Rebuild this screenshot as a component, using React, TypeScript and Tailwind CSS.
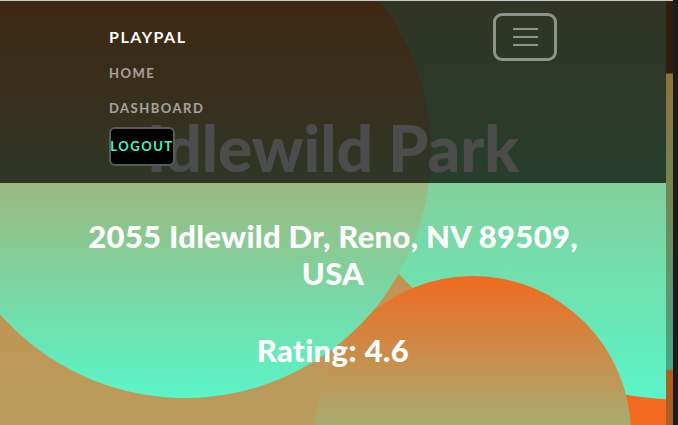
import React from "react";

export default function App() {
  return (
    <div className="flex h-[425px] w-[678px] overflow-hidden bg-[#1c1c1c] font-['Lato','Liberation_Sans',sans-serif]">
      <main className="relative h-[425px] w-[666px] overflow-hidden border-t border-[#c8c8c8] bg-[linear-gradient(to_bottom,#d97f39,#b89d5e)]">
        {/* decorative background blobs */}
        <div className="absolute left-[400px] top-[349px] h-[600px] w-[600px] rounded-full bg-[#f16a20]" />
        <div className="absolute left-[290px] top-[-401px] h-[800px] w-[800px] rounded-full bg-[linear-gradient(to_bottom,#f06a20,#5af5c8)]" />
        <div className="absolute left-[315px] top-[275px] h-[316px] w-[316px] rounded-full bg-[linear-gradient(to_bottom,#f06a20,#5af5c8)]" />
        <div className="absolute left-[-61px] top-[-95px] h-[492px] w-[492px] rounded-full bg-[linear-gradient(to_bottom,#f06a20,#5af5c8)]" />

        {/* page content */}
        <section className="relative flex flex-col items-center pt-[115px] text-center text-white">
          <h1 className="text-[64px] font-black leading-none">Idlewild Park</h1>
          <p className="mt-[38px] max-w-[540px] text-[31px] font-black leading-[37px] tracking-[0.3px]">
            2055 Idlewild Dr, Reno, NV 89509, USA
          </p>
          <p className="mt-[40px] text-[31px] font-black leading-[37px] tracking-[0.4px]">Rating: 4.6</p>
        </section>

        {/* expanded mobile navbar */}
        <nav className="absolute left-0 right-0 top-0 h-[182px] bg-black/70">
          <div className="mx-auto w-[448px]">
            <div className="flex h-[60px] items-center justify-between pt-[12px]">
              <span className="text-[16px] font-bold tracking-[1.5px] text-white">PLAYPAL</span>
              <button className="flex h-[48px] w-[64px] flex-col items-center justify-center gap-[6px] rounded-[9px] border-[3px] border-[#8f9489]">
                <span className="h-[2px] w-[25px] bg-[#8f9489]" />
                <span className="h-[2px] w-[25px] bg-[#8f9489]" />
                <span className="h-[2px] w-[25px] bg-[#8f9489]" />
              </button>
            </div>
            <ul className="flex flex-col items-start">
              <li className="flex h-[22px] items-end text-[13px] font-bold tracking-[1.5px] text-white/55">HOME</li>
              <li className="flex h-[35px] items-end text-[13px] font-bold tracking-[1.5px] text-white/55">DASHBOARD</li>
              <li className="mt-[9px]">
                <button className="flex h-[39px] w-[66px] items-center justify-center rounded-[6px] border-2 border-[#5a5a5a] bg-black text-[13px] font-bold tracking-[1.5px] text-[#4ff0c0]">
                  LOGOUT
                </button>
              </li>
            </ul>
          </div>
        </nav>
      </main>
      <div className="h-[425px] w-[7px] border-t border-[#c8c8c8] bg-[linear-gradient(to_bottom,#2e1d0c_0px,#2e1d0c_72px,#917038_73px,#6f8858_200px,#4ca586_368px,#b25a1f_370px,#a65f2c_425px)]" />
      <div className="h-[425px] w-[5px] bg-[#1c1c1c]" />
    </div>
  );
}
